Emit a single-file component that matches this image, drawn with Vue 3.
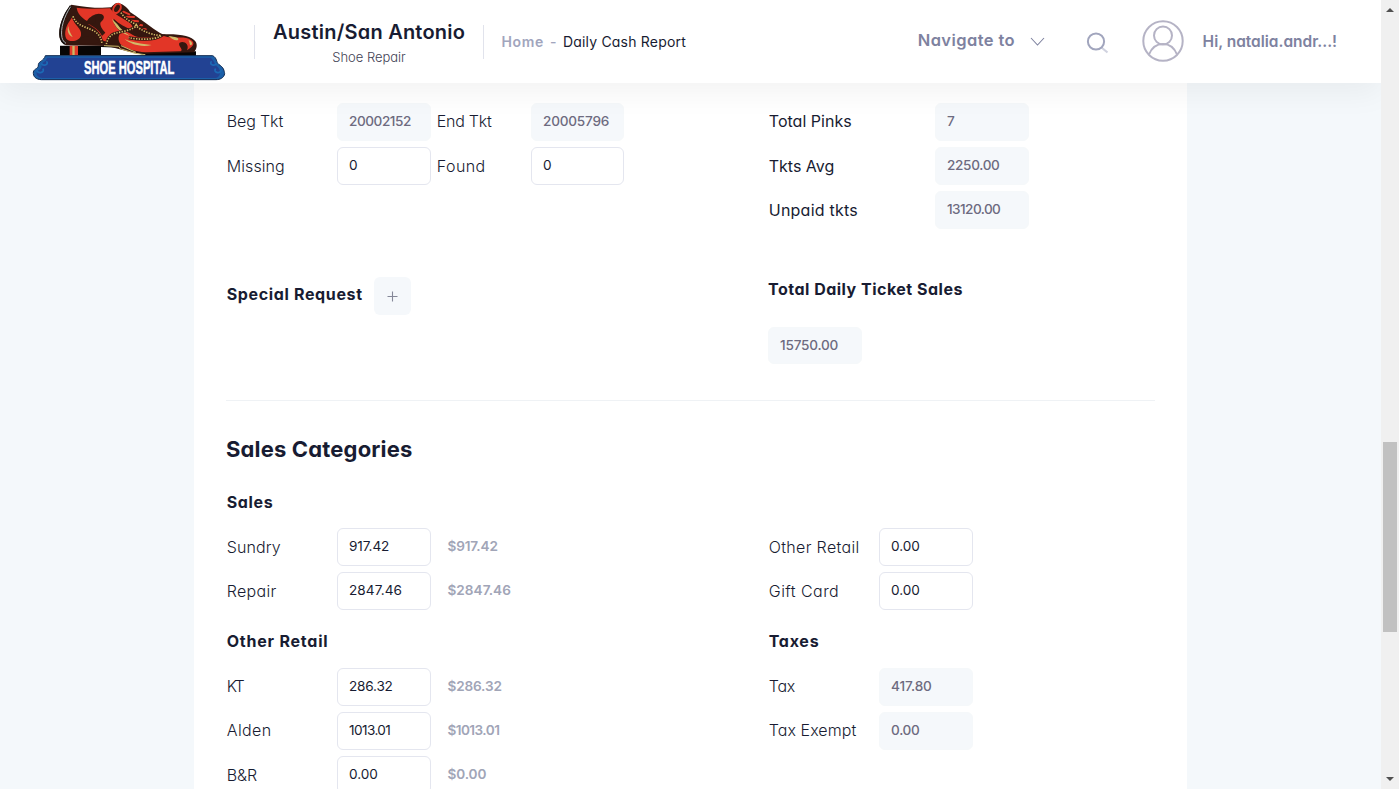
<script setup>
const pinks = [
  { label: 'Total Pinks', w: 82, value: '7', vw: 7, raised: true },
  { label: 'Tkts Avg', w: 64.5, value: '2250.00', vw: 52 },
  { label: 'Unpaid tkts', w: 88, value: '13120.00', vw: 53 },
]
const sales = [
  { label: 'Sundry', w: 53, value: '917.42', vw: 39.5, sum: '$917.42', sw: 49.5 },
  { label: 'Repair', w: 48.5, value: '2847.46', vw: 52, sum: '$2847.46', sw: 62.5 },
]
const otherSales = [
  { label: 'Other Retail', w: 89.5, value: '0.00', vw: 28 },
  { label: 'Gift Card', w: 69, value: '0.00', vw: 28 },
]
const retail = [
  { label: 'KT', w: 17, value: '286.32', vw: 43, sum: '$286.32', sw: 53.5, raised: true },
  { label: 'Alden', w: 43.5, value: '1013.01', vw: 41, sum: '$1013.01', sw: 51.5, raised: true },
  { label: 'B&R', w: 29.5, value: '0.00', vw: 28, sum: '$0.00', sw: 38 },
]
const taxes = [
  { label: 'Tax', w: 25.5, value: '417.80', vw: 40, raised: true },
  { label: 'Tax Exempt', w: 86.5, value: '0.00', vw: 28, raised: true },
]

// Tracks a line of text so that it spans the given width.
const vFit = {
  mounted(el, { value }) {
    const gaps = el.textContent.trim().length - 1
    if (gaps < 1) return
    const natural = el.getBoundingClientRect().width
    const spacing = (value + 0.9 - natural) / gaps
    el.style.letterSpacing = `${spacing}px`
    el.style.marginRight = `${-spacing}px`
  },
}
</script>

<template>
  <div class="page">
    <div class="view">
      <header class="header">
        <svg class="logo" viewBox="36 6 582 236" width="194" height="78.67">
          <path d="M120 137H243V166H120Z" fill="#080606" />
          <path d="M240 137L300 140L372 158L528 154V167H243L243 150Z" fill="#080606" />
          <path d="M243 141L300 143L372 166H243Z" fill="#fff" />
          <path d="M149 137H174V166H149Z" fill="#e23a2a" />
          <path d="M157 137H164V166H157Z" fill="#c9b967" />
          <path d="M154 14C130 36 112 88 120 116C124 128 134 136 143 136L262 138L330 156L380 161L522 157C531 146 533 134 526 124C515 108 480 101 428 103C405 92 378 68 330 36C322 20 306 10 290 9C282 12 278 17 274 22C238 26 196 21 154 14Z" fill="#35170f" />
          <path d="M153 18C131 48 117 86 123 113C125 121 129 127 135 131" fill="none" stroke="#15100e" stroke-width="8" />
          <path d="M152 20C133 48 120 86 126 113C128 121 132 126 138 130" fill="none" stroke="#b5b5b5" stroke-width="3" />
          <path d="M170 23C205 28 240 26 270 25C282 42 304 53 329 68C338 76 342 88 337 91C318 82 297 72 281 56C278 71 289 83 301 94C282 101 266 109 259 125L247 121C242 94 222 82 203 72C222 77 230 78 235 69C240 60 253 52 245 44C236 36 210 47 201 63C184 52 172 40 170 23Z" fill="#e23627" />
          <path d="M228 68C220 56 232 40 245 43C257 48 251 60 242 67C238 75 246 88 256 98L246 108C238 90 222 80 208 74Z" fill="#35170f" />
          <path d="M151 60C138 76 131 101 139 116C148 129 180 124 183 106C187 84 160 76 157 50Z" fill="#e23627" />
          <path d="M145 78C140 91 145 107 158 111C151 99 146 91 145 78Z" fill="#d2ba68" />
          <path d="M192 111C208 104 229 111 240 128L190 131C166 130 175 119 192 111Z" fill="#35170f" />
          <path d="M304 97C318 90 330 101 344 108C375 121 423 103 435 109C462 119 493 105 514 121C528 131 517 141 501 151C510 131 490 121 479 128C471 137 496 151 479 154L377 157C345 155 314 144 301 132C294 121 293 106 304 97Z" fill="#e23627" />
          <path d="M276 57C286 84 304 100 330 108C316 99 302 88 292 73ZM314 117C335 127 363 132 395 135C364 143 330 132 314 117ZM445 108C466 110 480 114 474 120C466 124 454 115 445 108ZM505 120C515 123 520 132 513 136C507 134 511 127 505 120Z" fill="#d2ba68" />
          <ellipse cx="291" cy="25" rx="10" ry="15" transform="rotate(30 291 25)" fill="#35170f" stroke="#e23627" stroke-width="6" />
          <path d="M310 35L328 43M321 50L342 51M333 62L354 64M346 73L366 76M358 86L377 88" stroke="#e23627" stroke-width="6" stroke-linecap="round" />
          <path d="M159 49C169 80 207 82 227 96C239 105 244 117 246 131M303 38C313 55 337 70 353 74C335 93 305 94 282 101C266 109 262 121 259 132M345 75C364 91 385 103 424 107C402 121 354 119 326 113" fill="none" stroke="#35170f" stroke-width="9" />
          <path d="M159 49C169 80 207 82 227 96C239 105 244 117 246 131M303 38C313 55 337 70 353 74C335 93 305 94 282 101C266 109 262 121 259 132M345 75C364 91 385 103 424 107C402 121 354 119 326 113" fill="none" stroke="#d2ba68" stroke-width="5" stroke-dasharray="4 4" />
          <path d="M252 137L296 139L303 149M304 147L345 160L376 164M303 137L348 157" stroke="#c9b967" stroke-width="3" fill="none" />
          <path d="M76 167H578C592 174 588 187 596 193C612 203 612 211 614 221C612 234 600 239 588 239H64C47 238 39 230 40 216C43 204 56 208 55 194C55 184 71 184 76 167Z" fill="#1c5fa8" stroke="#102950" stroke-width="3" />
          <path d="M82 173H572C582 180 582 190 590 199C604 208 604 230 588 234H66C48 230 44 216 58 209C70 204 60 190 72 186C80 182 78 176 82 173Z" fill="#224293" />
          <path d="M64 190C70 201 89 192 79 184M50 211C55 224 77 216 68 206M590 190C583 201 565 192 575 184M604 211C599 224 578 216 587 206" fill="none" stroke="#1c69b4" stroke-width="5" />
          <text x="192" y="223" class="logo-text" textLength="271" lengthAdjust="spacingAndGlyphs">SHOE HOSPITAL</text>
        </svg>
        <div class="brand">
          <div class="brand-name"><span v-fit="191">Austin/San Antonio</span></div>
          <div class="brand-sub"><span v-fit="72.5">Shoe Repair</span></div>
        </div>
        <nav class="crumbs">
          <span v-fit="41" class="crumb-home">Home</span>
          <span class="crumb-dash">-</span>
          <span v-fit="122" class="crumb-here">Daily Cash Report</span>
        </nav>
        <div class="tools">
          <span v-fit="96" class="navigate">Navigate to</span>
          <svg class="chevron" width="16" height="10" viewBox="0 0 16 10"><path d="M1 1L7.5 8L14 1" fill="none" stroke="#7e829f" stroke-width="1.1" /></svg>
          <svg class="search" width="24" height="24" viewBox="0 0 24 24" fill="none">
            <path d="M15.5 15.5L21.5 20.5" stroke="#d0d2df" stroke-width="2.2" />
            <circle cx="10" cy="9.5" r="8.1" stroke="#a1a5bd" stroke-width="2" />
          </svg>
          <svg class="avatar" width="42" height="42" viewBox="0 0 42 42" fill="none" stroke="#b5b3c5" stroke-width="2">
            <circle cx="21" cy="21" r="19.7" />
            <circle cx="21" cy="15.5" r="9" />
            <path d="M7 34.5C10 27 15 24 21 24S32 27 35 34.5" />
          </svg>
          <span v-fit="133.5" class="user">Hi, natalia.andr...!</span>
        </div>
      </header>

      <main class="card">
        <section class="columns tickets">
          <div>
            <div class="row raised">
              <span class="label light"><span v-fit="55.5">Beg Tkt</span></span>
              <span class="field off"><span v-fit="61.5">20002152</span></span>
              <span class="label light second"><span v-fit="54">End Tkt</span></span>
              <span class="field off narrow"><span v-fit="65.5">20005796</span></span>
            </div>
            <div class="row">
              <span class="label light"><span v-fit="57">Missing</span></span>
              <span class="field"><span>0</span></span>
              <span class="label light second"><span v-fit="47.5">Found</span></span>
              <span class="field narrow"><span>0</span></span>
            </div>
          </div>
          <div>
            <div v-for="r in pinks" :key="r.label" class="row" :class="{ raised: r.raised }">
              <span class="label wide"><span v-fit="r.w">{{ r.label }}</span></span>
              <span class="field off"><span v-fit="r.vw">{{ r.value }}</span></span>
            </div>
          </div>
        </section>

        <section class="columns requests">
          <div class="special">
            <h3><span v-fit="134.5">Special Request</span></h3>
            <button class="add" type="button">
              <svg width="11" height="11" viewBox="0 0 11 11"><path d="M5.5 .5V10.5M.5 5.5H10.5" stroke="#858898" stroke-width="1.1" /></svg>
            </button>
          </div>
          <div class="daily">
            <h3><span v-fit="193.5">Total Daily Ticket Sales</span></h3>
            <span class="field off"><span v-fit="57.5">15750.00</span></span>
          </div>
        </section>

        <h2><span v-fit="185.4">Sales Categories</span></h2>

        <section class="columns group">
          <div>
            <h3><span v-fit="45">Sales</span></h3>
            <div v-for="r in sales" :key="r.label" class="row">
              <span class="label light"><span v-fit="r.w">{{ r.label }}</span></span>
              <span class="field"><span v-fit="r.vw">{{ r.value }}</span></span>
              <span class="sum"><span v-fit="r.sw">{{ r.sum }}</span></span>
            </div>
          </div>
          <div>
            <h3></h3>
            <div v-for="r in otherSales" :key="r.label" class="row">
              <span class="label light"><span v-fit="r.w">{{ r.label }}</span></span>
              <span class="field"><span v-fit="r.vw">{{ r.value }}</span></span>
            </div>
          </div>
        </section>

        <section class="columns group">
          <div>
            <h3><span v-fit="100">Other Retail</span></h3>
            <div v-for="r in retail" :key="r.label" class="row" :class="{ raised: r.raised }">
              <span class="label light"><span v-fit="r.w">{{ r.label }}</span></span>
              <span class="field"><span v-fit="r.vw">{{ r.value }}</span></span>
              <span class="sum"><span v-fit="r.sw">{{ r.sum }}</span></span>
            </div>
          </div>
          <div>
            <h3><span v-fit="49">Taxes</span></h3>
            <div v-for="r in taxes" :key="r.label" class="row" :class="{ raised: r.raised }">
              <span class="label light"><span v-fit="r.w">{{ r.label }}</span></span>
              <span class="field off"><span v-fit="r.vw">{{ r.value }}</span></span>
            </div>
          </div>
        </section>
      </main>
    </div>

    <aside class="scrollbar">
      <svg width="8" height="4" viewBox="0 0 8 4"><path d="M0 4L4 0L8 4Z" fill="#505050" /></svg>
      <span class="thumb"></span>
      <svg class="down" width="8" height="4" viewBox="0 0 8 4"><path d="M0 0L4 4L8 0Z" fill="#505050" /></svg>
    </aside>
  </div>
</template>

<style>
body { overflow: hidden; }
</style>

<style scoped>
.page {
  display: flex;
  width: 1399px;
  height: 789px;
  overflow: hidden;
  font-family: Inter, "Open Sans", sans-serif;
  font-feature-settings: "cv11", "calt" 0;
  color: #181c32;
  white-space: nowrap;
}
.page * { box-sizing: border-box; }
.view {
  width: 1381px;
  height: 789px;
  overflow: hidden;
  background: #f4f8fb;
}
.header {
  position: relative;
  z-index: 2;
  display: flex;
  align-items: flex-start;
  height: 83px;
  background: #fff;
  box-shadow: 0 10px 30px rgba(0, 0, 0, 0.05);
}
.logo { flex: none; margin: 2px 28px 0 32px; overflow: visible; }
.logo-text {
  font: bold 54px "Liberation Sans", sans-serif;
  fill: #fff;
  stroke: #fff;
  stroke-width: 1.5px;
}
.brand {
  width: 230px;
  height: 34px;
  margin-top: 25px;
  border-left: 1px solid #e1e3ec;
  border-right: 1px solid #e1e3ec;
  text-align: center;
}
.brand span { display: inline-block; }
.brand-name {
  margin-top: -6px;
  font-size: 20px;
  line-height: 27px;
  font-weight: 600;
}
.brand-sub {
  font-size: 13px;
  line-height: 23px;
  font-weight: 300;
  color: #3f4254;
}
.crumbs {
  display: flex;
  margin: 32px 0 0 17.5px;
  font-size: 14px;
  line-height: 20px;
}
.crumb-home { color: #a1a5bd; font-weight: 600; }
.crumb-dash { width: 19.5px; text-align: center; color: #a1a5bd; font-weight: 500; }
.tools {
  display: flex;
  margin-left: auto;
  padding-right: 44px;
  color: #7e829f;
  font-weight: 600;
}
.navigate { margin-top: 29px; font-size: 16.5px; line-height: 22px; }
.chevron { margin: 37px 0 0 15.5px; }
.search { margin: 32px 0 0 40px; }
.avatar { margin: 20px 0 0 32px; }
.user { margin: 31px 0 0 18.5px; font-size: 15.5px; line-height: 22px; }
.card {
  width: 993px;
  height: 760px;
  margin-left: 194px;
  padding: 20px 32px 0;
  background: #fff;
}
.columns { display: grid; grid-template-columns: 542px 1fr; }
.row { display: flex; align-items: center; height: 38px; margin-bottom: 6px; }
.label { width: 111px; padding-left: 0.8px; font-size: 16px; line-height: 22px; }
.raised .label { padding-bottom: 2px; }
.label > span, .field > span, .sum > span, h2 > span, h3 > span { display: inline-block; }
.light { font-weight: 300; }
.second { width: 100px; padding-left: 5.8px; }
.wide { width: 167px; }
.field {
  display: flex;
  align-items: center;
  width: 94px;
  height: 38px;
  padding: 0 0 2px 11px;
  border: 1px solid #e4e6ef;
  border-radius: 6px;
  font-size: 13.6px;
}
.off { border-color: #f5f8fa; background: #f5f8fb; color: #6d6b80; font-weight: 450; }
.narrow { width: 93px; }
.sum { margin-left: 16.5px; padding-bottom: 2px; font-size: 13.6px; font-weight: 600; color: #a1a5b7; }
h2, h3 { margin: 0; }
h3 { height: 22px; padding-left: 0.7px; font-size: 16px; line-height: 20px; font-weight: 700; }
h2 { height: 32px; margin-top: 33px; font-size: 22px; line-height: 30px; font-weight: 700; }
.requests { height: 166px; border-bottom: 1px solid #eff2f5; }
.special { display: flex; padding-top: 42px; }
.special h3 { margin: 7px 0 0; width: 148px; }
.add {
  display: flex;
  align-items: center;
  justify-content: center;
  width: 37px;
  height: 38px;
  padding: 0;
  border: 0;
  border-radius: 6px;
  background: #f5f8fb;
}
.daily h3 { margin: 44px 0 26px; padding-left: 0; }
.daily .field { height: 37px; }
.group h3 { margin: 26px 0 14px; }
.group + .group h3 { margin: 15px 0 15px; }
.scrollbar {
  display: flex;
  flex-direction: column;
  align-items: center;
  width: 18px;
  height: 789px;
  padding-top: 8px;
  background: #f0f0f0;
}
.thumb { width: 14px; height: 190px; margin-top: 430px; background: #c1c1c1; }
.down { margin-top: 145px; }
</style>
